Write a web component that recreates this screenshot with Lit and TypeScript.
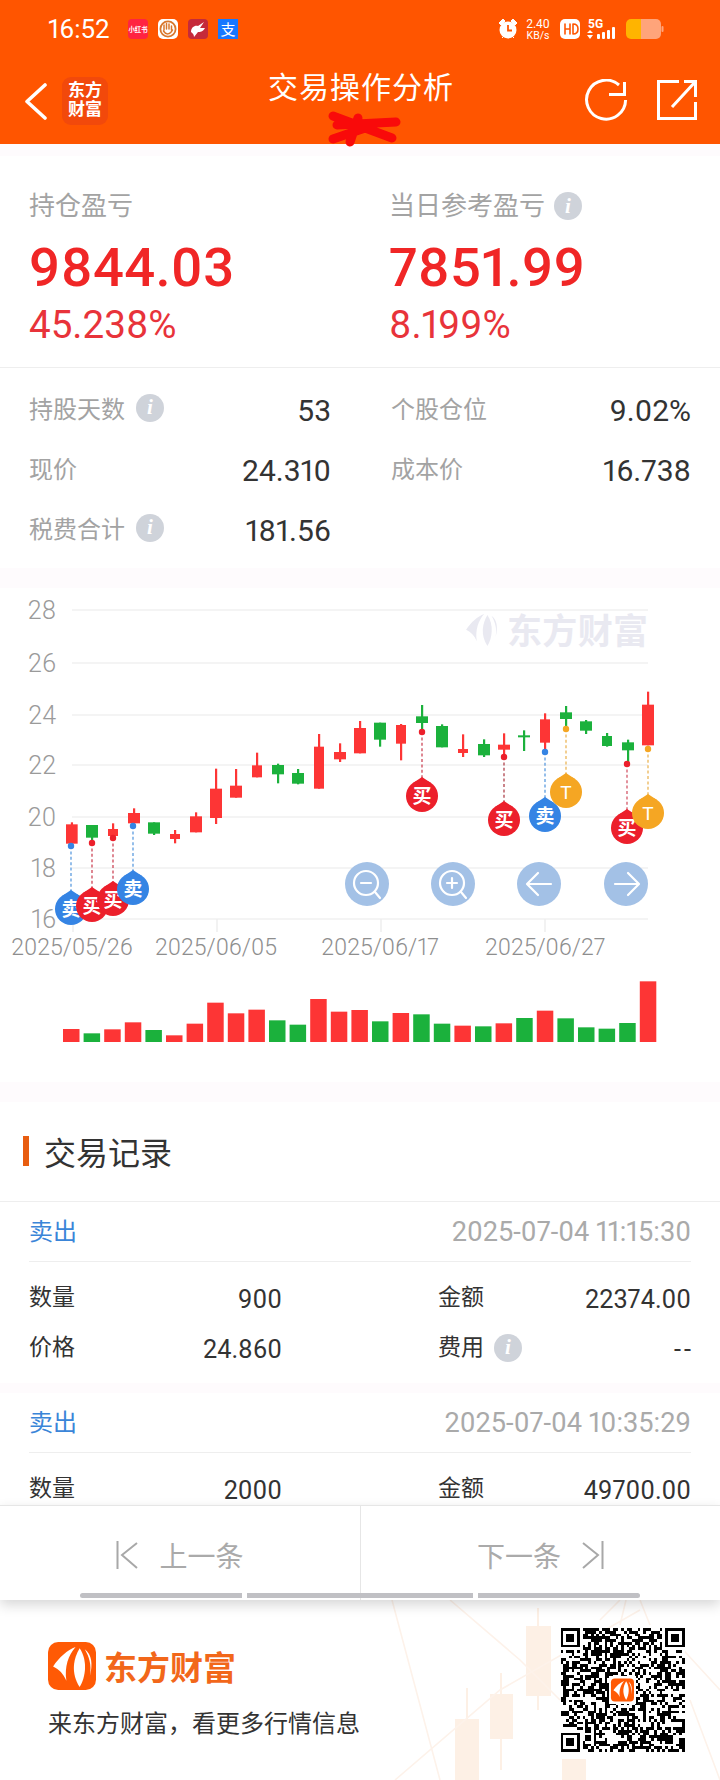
import { LitElement, html, css, svg } from "lit";
import { customElement } from "lit/decorators.js";

const R = "#fd3535";
const G = "#1bb13c";
// [bodyLeft, bodyRight, bodyTop, bodyBottom, wickTop, wickBottom, color] in 3x crop units
const CANDLES: [number, number, number, number, number, number, string][] = [
  [198, 233, 703, 761, 697, 761, R], [258, 294, 705, 743, 705, 750, G], [324, 354, 717, 738, 700, 745, R],
  [384, 420, 669, 700, 655, 700, R], [444, 480, 697, 731, 697, 735, G], [510, 540, 732, 747, 720, 760, R],
  [570, 606, 679, 727, 667, 727, R], [630, 666, 596, 684, 536, 702, R], [690, 726, 587, 623, 537, 623, R],
  [756, 786, 526, 562, 488, 562, R], [816, 852, 525, 553, 521, 580, G], [876, 912, 549, 581, 537, 583, G],
  [942, 972, 470, 596, 432, 596, R], [1002, 1038, 486, 508, 460, 516, R], [1062, 1098, 414, 490, 393, 490, R],
  [1122, 1158, 398, 449, 398, 470, G], [1188, 1218, 405, 461, 402, 511, R], [1248, 1284, 379, 399, 345, 420, G],
  [1308, 1344, 408, 472, 403, 472, G], [1374, 1404, 477, 489, 433, 501, R], [1434, 1470, 462, 496, 448, 501, G],
  [1494, 1530, 464, 479, 430, 495, R], [1554, 1590, 436, 442, 421, 483, G], [1620, 1650, 388, 458, 370, 480, R],
  [1680, 1716, 367, 387, 348, 410, G], [1740, 1776, 394, 422, 390, 432, G], [1806, 1836, 438, 468, 429, 470, G],
  [1866, 1902, 457, 481, 449, 520, G], [1926, 1962, 344, 466, 305, 466, R],
];
const VOLS: [number, string][] = [
  [507, R], [520, G], [508, R], [487, R], [510, G], [526, R], [491, R], [428, R], [460, R], [449, R],
  [481, G], [494, G], [417, R], [455, R], [450, R], [484, G], [459, R], [463, G], [491, G], [497, R],
  [499, G], [490, R], [474, G], [452, R], [475, G], [502, G], [506, G], [489, G], [364, R],
];
const BLUE = "#3584e4", RED = "#ec1f2b", ORG = "#f5a623";
// [centre x, centre y, dot y, label, fill, dash colour]
const MARKS: [number, number, number, string, string, string][] = [
  [422, 796, 732, "买", RED, "#c8374a"],
  [504, 820, 757, "买", RED, "#a8323c"],
  [545, 816, 752, "卖", BLUE, "#4f93dc"],
  [566, 792, 729, "T", ORG, "#eab04a"],
  [627, 828, 764, "买", RED, "#d04a5c"],
  [648, 813, 749, "T", ORG, "#eab04a"],
  [71, 909, 846, "卖", BLUE, "#4f93dc"],
  [92, 906, 843, "买", RED, "#c8374a"],
  [113, 900, 838, "买", RED, "#c8374a"],
  [133, 889, 826, "卖", BLUE, "#4f93dc"],
];

function qrPath(): string {
  const n = 45;
  let seed = 20250704;
  const rnd = () => ((seed = (seed * 1664525 + 1013904223) >>> 0) / 4294967296);
  const finder = (x: number, y: number, ox: number, oy: number) => x >= ox - 1 && x <= ox + 7 && y >= oy - 1 && y <= oy + 7;
  let d = "";
  for (let y = 0; y < n; y++) {
    for (let x = 0; x < n; x++) {
      if (finder(x, y, 0, 0) || finder(x, y, n - 7, 0) || finder(x, y, 0, n - 7)) continue;
      const on = x === 6 || y === 6 ? (x + y) % 2 === 0 : rnd() < 0.52;
      if (on) d += `M${x} ${y}h1v1h-1z`;
    }
  }
  for (const [ox, oy] of [[0, 0], [n - 7, 0], [0, n - 7]]) {
    d += `M${ox} ${oy}h7v7h-7zM${ox + 1} ${oy + 1}v5h5v-5zM${ox + 2} ${oy + 2}h3v3h-3z`;
  }
  return d;
}

const feather = (c: string) => svg`
  <path d="M5 24 C11 15 19 8 27 5 C20 13 16 24 18 38 C15 31 11 27 5 24Z" fill=${c}/>
  <path d="M31 6 C25 16 22 30 31 44 C37 34 39 18 31 6Z" fill=${c}/>
  <path d="M36 7 C40 14 43 22 41 33 C44 22 43 12 36 7Z" fill=${c}/>`;

@customElement("app-root")
export class AppRoot extends LitElement {
  static styles = css`
    :host { display: block; width: 720px; height: 1780px; overflow: hidden; background: #fff;
      font-family: Roboto, "Noto Sans CJK SC", sans-serif; color: #333; font-variant-numeric: proportional-nums; }
    * { box-sizing: border-box; }
    .page { height: 1780px; display: flex; flex-direction: column; }
    .header { height: 144px; background: #ff5500; color: #fff; position: relative; flex: none; }
    .status { height: 58px; display: flex; align-items: center; padding: 0 56px 0 48px; }
    .time { font-size: 26px; width: 80px; }
    .apps { display: flex; gap: 10px; }
    .app { width: 20px; height: 20px; display: block; }
    .sys { margin-left: auto; display: block; }
    .nav { height: 86px; display: grid; grid-template-columns: 1fr auto 1fr; align-items: center; padding: 0 22px 0 24px; }
    .nav-left { display: flex; align-items: center; gap: 14px; }
    .nav-right { display: flex; justify-content: flex-end; gap: 28px; }
    .logo-chip { width: 46px; height: 48px; border-radius: 9px; background: #f2490b; font-weight: 700; font-size: 17px;
      line-height: 19px; text-align: center; padding-top: 4px; }
    .title { font-size: 30px; font-weight: 400; padding-bottom: 32px; letter-spacing: 1px; }
    .scribble { position: absolute; left: 320px; top: 106px; }
    .strip { background: #fefbfd; flex: none; }
    .scroll { flex: 1; overflow: hidden; min-height: 0; }
    .stats { padding: 36px 29px 0 29px; display: grid; grid-template-columns: 360px 1fr; border-bottom: 1px solid #eee; height: 212px; }
    .s-label { font-size: 26px; line-height: 28px; color: #a3a3a3; display: flex; align-items: center; gap: 9px; }
    .big { font-size: 54.4px; font-weight: 500; line-height: 60px; color: #f02626; margin-top: 18px; letter-spacing: .3px; }
    .pct { font-size: 38.6px; line-height: 40px; color: #e8333a; margin-top: 7px; }
    .info { width: 28px; height: 28px; border-radius: 50%; background: #cfd3da; color: #fff; flex: none; display: inline-flex;
      align-items: center; justify-content: center; font: italic 700 21px "Liberation Serif", serif; }
    .rows { padding: 12px 29px 8px 29px; display: grid; grid-template-columns: 302px 300px; column-gap: 60px; }
    .row { height: 60px; display: flex; align-items: center; justify-content: space-between; }
    .r-label { font-size: 24px; color: #a3a3a3; display: flex; align-items: center; gap: 11px; padding-bottom: 5px; }
    .r-val { font-size: 30px; color: #333; }
    .chart { display: block; width: 720px; height: 494px; }
    .sect { height: 100px; display: flex; align-items: center; gap: 15px; padding: 0 0 1px 23px; border-bottom: 1px solid #eee; font-size: 32px; color: #333; }
    .sect i { display: block; width: 6px; height: 30px; background: #e85d10; }
    .rec-head { margin: 0 29px; height: 60px; display: flex; align-items: center; justify-content: space-between; border-bottom: 1px solid #eee; padding-top: 2px; }
    .kind { font-size: 24px; color: #3a85d8; line-height: 1.2; }
    .stamp { font-size: 27.2px; color: #aaa; line-height: 1.2; }
    .rec-grid { padding: 13px 29px 8px 29px; display: grid; grid-template-columns: 253px 253px; column-gap: 156px; }
    .rec-row { height: 50px; display: flex; align-items: center; justify-content: space-between; }
    .rec-row .l { font-size: 23px; color: #333; display: flex; align-items: center; gap: 10px; padding-bottom: 5px; line-height: 1.2; }
    .rec-row .v { font-size: 25.3px; color: #333; line-height: 1.2; }
    .rec-row .dash { letter-spacing: 3px; margin-right: -3px; }
    .pager { flex: none; height: 95px; border-top: 1px solid #e6e6e6; display: grid; grid-template-columns: 360px 360px; position: relative; z-index: 2;
      background: #fff; box-shadow: 0 5px 12px rgba(0,0,0,.16); }
    .pg { display: flex; align-items: center; justify-content: center; gap: 21px; font-size: 28px; color: #aaa; padding-top: 4px; }
    .pg + .pg { border-left: 1px solid #e6e6e6; }
    .bars { position: absolute; left: 80px; bottom: 2px; display: flex; gap: 5px; }
    .bars b { display: block; height: 5px; background: #c0c0c4; }
    .bars b:first-child { width: 162px; border-radius: 3px 0 0 3px; }
    .bars b:nth-child(2) { width: 226px; }
    .bars b:last-child { width: 162px; border-radius: 0 3px 3px 0; }
    .footer { flex: none; height: 180px; position: relative; padding: 42px 0 0 48px; overflow: hidden; background: #fff; }
    .deco { position: absolute; left: 0; top: 0; }
    .brand { position: relative; display: flex; align-items: center; gap: 8px; height: 48px; }
    .brand-name { font-size: 33px; font-weight: 700; color: #f2671a; }
    .tag { position: relative; font-size: 24px; color: #333; margin-top: 18px; line-height: 32px; }
    .qr { position: absolute; left: 560px; top: 28px; }
  `;

  private info() { return html`<span class="info">i</span>`; }

  private chart() {
    const t = (v: number) => 590 + v / 3;
    const grid = [610, 663, 715, 765, 817, 868, 919];
    const labs = ["28", "26", "24", "22", "20", "18", "16"];
    return html`<svg class="chart" viewBox="0 588 720 494" font-family="Roboto, 'Noto Sans CJK SC', sans-serif">
      ${grid.map((y) => svg`<line x1="72" x2="648" y1=${y} y2=${y} stroke="#f4f4f4" stroke-width="2"/>`)}
      ${[73, 217, 381, 545].map((x) => svg`<line x1=${x} x2=${x} y1="919" y2="932" stroke="#eee" stroke-width="1.5"/>`)}
      ${labs.map((l, i) => svg`<text x="56" y=${grid[i] + 9} text-anchor="end" font-size="25" font-weight="300" fill="#9a9a9a">${l}</text>`)}
      ${[["2025/05/26", 72], ["2025/06/05", 216], ["2025/06/17", 380], ["2025/06/27", 545]].map(
        ([d, x]) => svg`<text x=${x} y="955" text-anchor="middle" font-size="23" font-weight="300" fill="#8e8e8e">${d}</text>`)}
      <g transform="translate(462 610) scale(.82)">${feather("#e9e9f1")}</g>
      <text x="507" y="644" font-size="35" font-weight="700" fill="#e9e9f1" textLength="141">东方财富</text>
      ${CANDLES.map(([l, r, bt, bb, wt, wb, c]) => {
        const cx = (l + r) / 6;
        return svg`<rect x=${cx - 1} y=${t(wt)} width="2.2" height=${(wb - wt) / 3} fill=${c}/>
          <rect x=${l / 3} y=${t(bt)} width=${(r - l) / 3} height=${(bb - bt) / 3} fill=${c}/>`;
      })}
      ${VOLS.map(([top, c], i) => svg`<rect x=${63 + i * 20.6} y=${860 + top / 3} width="16.5" height=${(546 - top) / 3} fill=${c}/>`)}
      ${MARKS.map(([x, y, dy, l, fill, dash]) => svg`
        <line x1=${x} x2=${x} y1=${dy} y2=${y - 18} stroke=${dash} stroke-width="1.2" stroke-dasharray="3 2.4"/>
        <circle cx=${x} cy=${dy} r="3.2" fill=${fill}/>
        <path d="M${x - 9} ${y - 13} L${x} ${y - 19} L${x + 9} ${y - 13}Z" fill=${fill}/>
        <circle cx=${x} cy=${y} r="16" fill=${fill}/>
        <text x=${x} y=${y + 7} text-anchor="middle" font-size="19" font-weight=${l === "T" ? 400 : 700} fill="#fff">${l}</text>`)}
      <g fill="#a3c1e6">
        ${[367, 453, 539, 626].map((x) => svg`<circle cx=${x} cy="884" r="22"/>`)}
      </g>
      <g fill="none" stroke="#fff" stroke-width="2.2" stroke-linecap="round" stroke-linejoin="round">
        <circle cx="366" cy="883" r="12"/><path d="M375 892 L380 898 M361 883 H371"/>
        <circle cx="452" cy="883" r="12"/><path d="M461 892 L466 898 M447 883 H457 M452 878 V888"/>
        <path d="M528 884 H551 M538 873 L527 884 L538 895"/>
        <path d="M615 884 H638 M628 873 L639 884 L628 895"/>
      </g>
    </svg>`;
  }

  private record(kind: string, stamp: string, rows: [string, string, string, string, boolean][]) {
    return html`<div class="rec-head"><span class="kind">${kind}</span><span class="stamp">${stamp}</span></div>
      <div class="rec-grid">
        ${rows.map(([a, b, c, d, inf]) => html`
          <div class="rec-row"><span class="l">${a}</span><span class="v">${b}</span></div>
          <div class="rec-row"><span class="l">${c}${inf ? this.info() : ""}</span><span class="v ${d === "--" ? "dash" : ""}">${d}</span></div>`)}
      </div>`;
  }

  render() {
    return html`<div class="page">
      <div class="header">
        <div class="status">
          <span class="time">16:52</span>
          <div class="apps">
            <svg class="app" viewBox="0 0 20 20"><rect width="20" height="20" rx="4" fill="#ff2442"/><text x="10" y="13" text-anchor="middle" font-size="6.4" font-weight="700" fill="#fff" font-family="'Noto Sans CJK SC', sans-serif">小红书</text></svg>
            <svg class="app" viewBox="0 0 20 20"><rect width="20" height="20" rx="5" fill="#fff"/><circle cx="10" cy="10" r="7.6" fill="none" stroke="#d9782e" stroke-width="1.8"/><path d="M6 11 V6 M8.5 10 V4.5 M11 10 V5 M13.5 11 V7 M5.5 12 C8 16 12 16 14.5 11" fill="none" stroke="#d9782e" stroke-width="1.5" stroke-linecap="round"/></svg>
            <svg class="app" viewBox="0 0 20 20"><rect width="20" height="20" rx="4" fill="#c52a3a"/><path d="M3 13 C3 8 7 6 10 7 L16 3 L12 9 L17 9 C15 13 12 13 10 13 L6 18 C6 15 4 14 3 13 Z" fill="#fff"/></svg>
            <svg class="app" viewBox="0 0 20 20"><rect width="20" height="20" fill="#1677ff"/><text x="10" y="15.5" text-anchor="middle" font-size="15" fill="#fff" font-family="'Noto Sans CJK SC', sans-serif">支</text></svg>
          </div>
          <svg class="sys" width="166" height="24" viewBox="0 0 166 24">
            <g fill="#fff">
              <circle cx="10" cy="13" r="8.5"/>
              <path d="M1 6 L5 2 L7 4 L3 8Z M19 6 L15 2 L13 4 L17 8Z M4 21 L6 19 M16 21 L14 19" stroke="#fff"/>
              <text x="40" y="11" text-anchor="middle" font-size="12" font-family="Roboto, sans-serif">2.40</text>
              <text x="40" y="22" text-anchor="middle" font-size="10.5" font-family="Roboto, sans-serif">KB/s</text>
              <rect x="62" y="2" width="20" height="20" rx="5"/>
              <text x="90" y="11" font-size="12" font-weight="700" font-family="Roboto, sans-serif">5G</text>
              <path d="M92 13 L95 16 H89Z M89 18 H95 L92 22Z"/>
              <rect x="99" y="17" width="3" height="5" rx="1"/><rect x="104" y="15" width="3" height="7" rx="1"/><rect x="109" y="13" width="3" height="9" rx="1"/><rect x="114" y="10" width="3" height="12" rx="1"/>
            </g>
            <g fill="none" stroke="#ff5500" stroke-width="1.6" stroke-linecap="round" stroke-linejoin="round"><path d="M67 7 V17 M72 7 V17 M67 12 H72"/><path d="M75 7 V17 C79 17 80 15 80 12 C80 9 79 7 75 7Z"/></g>
            <path d="M10 8 V13.5 H14" stroke="#ff5500" stroke-width="1.8" fill="none"/>
            <path d="M128 7 a5 5 0 0 1 5 -5 h10 v20 h-10 a5 5 0 0 1 -5 -5z" fill="#ffb400"/>
            <path d="M143 2 h15 a5 5 0 0 1 5 5 v10 a5 5 0 0 1 -5 5 h-15z" fill="#ffa47a"/>
            <rect x="163.5" y="9" width="2" height="6" rx="1" fill="#ffa47a"/>
          </svg>
        </div>
        <div class="nav">
          <div class="nav-left">
            <svg width="24" height="38" viewBox="0 0 24 38"><path d="M21 3 L3 19.5 L21 36" fill="none" stroke="#fff" stroke-width="3.6" stroke-linecap="round" stroke-linejoin="round"/></svg>
            <div class="logo-chip">东方<br />财富</div>
          </div>
          <div class="title">交易操作分析</div>
          <div class="nav-right">
            <svg width="44" height="44" viewBox="585 78 44 44" fill="none" stroke="#fff" stroke-width="3"><path d="M620 84 A19.5 19.5 0 1 0 626.6 99"/><path d="M610 93.5 H625.5 V81"/></svg>
            <svg width="42" height="42" viewBox="656 79 42 42" fill="none" stroke="#fff" stroke-width="3"><path d="M679 81.5 H658.5 V118.5 H695.5 V102"/><path d="M684 81.5 H695.5 V97 M695.5 81.5 L672 107"/></svg>
          </div>
        </div>
        <svg class="scribble" width="90" height="42" viewBox="320 106 90 42" fill="none" stroke="#f90a0a" stroke-width="9" stroke-linecap="round"><path d="M333 116 L392 138 M337 125 L396 122 M333 139 L368 127 M350 142 L358 118"/></svg>
      </div>
      <div class="scroll">
        <div class="strip" style="height:12px"></div>
        <div class="stats">
          <div>
            <div class="s-label">持仓盈亏</div>
            <div class="big">9844.03</div>
            <div class="pct">45.238%</div>
          </div>
          <div>
            <div class="s-label">当日参考盈亏 ${this.info()}</div>
            <div class="big">7851.99</div>
            <div class="pct">8.199%</div>
          </div>
        </div>
        <div class="rows">
          <div class="row"><span class="r-label">持股天数 ${this.info()}</span><span class="r-val">53</span></div>
          <div class="row"><span class="r-label">个股仓位</span><span class="r-val">9.02%</span></div>
          <div class="row"><span class="r-label">现价</span><span class="r-val">24.310</span></div>
          <div class="row"><span class="r-label">成本价</span><span class="r-val">16.738</span></div>
          <div class="row"><span class="r-label">税费合计 ${this.info()}</span><span class="r-val">181.56</span></div>
        </div>
        <div class="strip" style="height:20px"></div>
        ${this.chart()}
        <div class="strip" style="height:20px"></div>
        <div class="sect"><i></i>交易记录</div>
        ${this.record("卖出", "2025-07-04 11:15:30", [["数量", "900", "金额", "22374.00", false], ["价格", "24.860", "费用", "--", true]])}
        <div class="strip" style="height:10px"></div>
        ${this.record("卖出", "2025-07-04 10:35:29", [["数量", "2000", "金额", "49700.00", false]])}
      </div>
      <div class="pager">
        <div class="pg">
          <svg width="22" height="30" viewBox="0 0 22 30" fill="none" stroke="#a8a8a8" stroke-width="2"><path d="M1.5 1 V29 M21 3 L6 15 L21 28"/></svg>
          <span>上一条</span>
        </div>
        <div class="pg">
          <span>下一条</span>
          <svg width="22" height="30" viewBox="0 0 22 30" fill="none" stroke="#a8a8a8" stroke-width="2"><path d="M20.5 1 V29 M1 3 L16 15 L1 28"/></svg>
        </div>
        <div class="bars"><b></b><b></b><b></b></div>
      </div>
      <div class="footer">
        <svg class="deco" width="720" height="180" viewBox="0 1600 720 180">
          <g fill="#fdf0e5" stroke="#fdf0e5" stroke-width="2">
            <path d="M467 1688 V1780 M501 1673 V1770 M538 1608 V1710 M574 1760 V1780" fill="none"/>
            <rect x="456" y="1720" width="22" height="60"/><rect x="491" y="1695" width="21" height="43"/>
            <rect x="527" y="1627" width="23" height="68"/><rect x="563" y="1760" width="22" height="20"/>
          </g>
          <path d="M392 1600 L440 1780 M450 1600 L520 1660 L560 1700 M395 1780 L500 1690 L640 1610 M600 1620 L620 1600 M620 1625 L626 1600 M650 1625 L640 1600 M665 1630 L720 1690 M690 1700 L720 1780" fill="none" stroke="#fdf2ea" stroke-width="1.6"/>
        </svg>
        <div class="brand">
          <svg width="48" height="48" viewBox="0 0 47 47"><rect width="47" height="47" rx="10" fill="#ff5a05"/>${feather("#fff")}</svg>
          <span class="brand-name">东方财富</span>
        </div>
        <div class="tag">来东方财富，看更多行情信息</div>
        <svg class="qr" width="125" height="124" viewBox="0 0 45 45" shape-rendering="crispEdges">
          <rect width="45" height="45" fill="#fff"/>
          <path d=${qrPath()} fill="#000" fill-rule="evenodd"/>
          <rect x="17.5" y="17.5" width="10" height="10" fill="#fff"/>
          <g transform="translate(18.3 18.3) scale(.178)" shape-rendering="auto"><rect width="47" height="47" rx="8" fill="#ff5a05"/>${feather("#fff")}</g>
        </svg>
      </div>
    </div>`;
  }
}
